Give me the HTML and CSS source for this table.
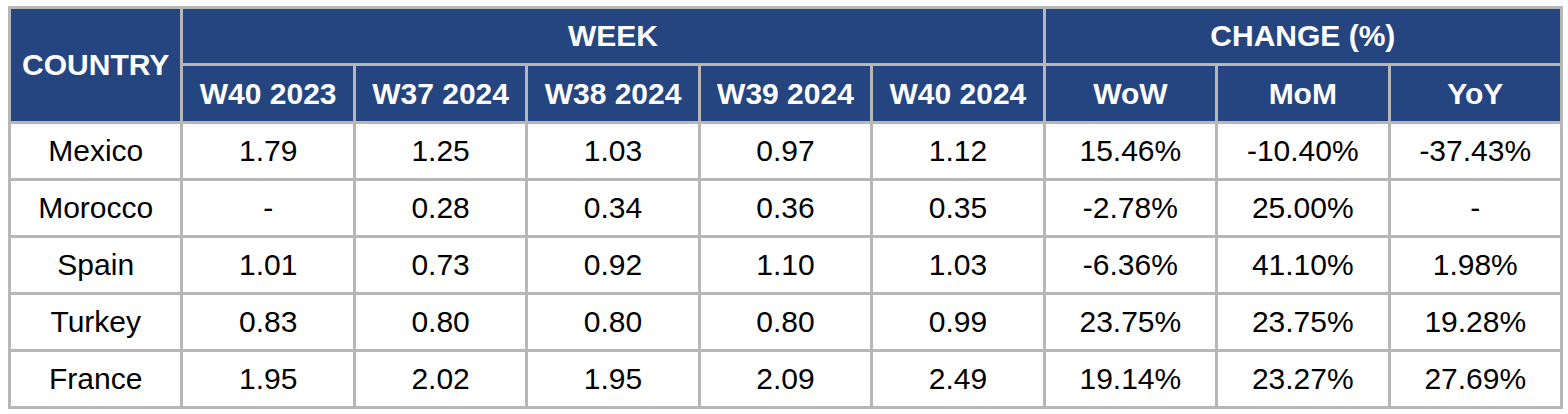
FILE: index.html
```html
<!DOCTYPE html>
<html>
<head>
<meta charset="utf-8">
<link rel="stylesheet" href="styles.css">
</head>
<body>
<table class="data">
  <colgroup>
    <col><col><col><col><col><col><col><col><col>
  </colgroup>
  <thead>
    <tr class="h1">
      <th rowspan="2" class="country-h">COUNTRY</th>
      <th colspan="5">WEEK</th>
      <th colspan="3">CHANGE (%)</th>
    </tr>
    <tr class="h2">
      <th>W40 2023</th>
      <th>W37 2024</th>
      <th>W38 2024</th>
      <th>W39 2024</th>
      <th>W40 2024</th>
      <th>WoW</th>
      <th>MoM</th>
      <th>YoY</th>
    </tr>
  </thead>
  <tbody>
    <tr><td>Mexico</td><td>1.79</td><td>1.25</td><td>1.03</td><td>0.97</td><td>1.12</td><td>15.46%</td><td>-10.40%</td><td>-37.43%</td></tr>
    <tr><td>Morocco</td><td>-</td><td>0.28</td><td>0.34</td><td>0.36</td><td>0.35</td><td>-2.78%</td><td>25.00%</td><td>-</td></tr>
    <tr><td>Spain</td><td>1.01</td><td>0.73</td><td>0.92</td><td>1.10</td><td>1.03</td><td>-6.36%</td><td>41.10%</td><td>1.98%</td></tr>
    <tr><td>Turkey</td><td>0.83</td><td>0.80</td><td>0.80</td><td>0.80</td><td>0.99</td><td>23.75%</td><td>23.75%</td><td>19.28%</td></tr>
    <tr><td>France</td><td>1.95</td><td>2.02</td><td>1.95</td><td>2.09</td><td>2.49</td><td>19.14%</td><td>23.27%</td><td>27.69%</td></tr>
  </tbody>
</table>
</body>
</html>
```

FILE: styles.css
```css
html, body {
  background: #ffffff;
}
body {
  margin: 6px 0 0 8px;
  font-family: "Liberation Sans", Arial, sans-serif;
}
.data {
  width: 1555px;
  table-layout: fixed;
  border-collapse: separate;
  border-spacing: 0;
  border-top: 3px solid #b7b7b7;
  border-left: 3px solid #b7b7b7;
}
.data th,
.data td {
  border-right: 3px solid #b7b7b7;
  border-bottom: 3px solid #b7b7b7;
  padding: 0;
  text-align: center;
  white-space: nowrap;
}
.data th {
  background: #254581;
  color: #ffffff;
  font-weight: bold;
  font-size: 30px;
}
.h1 th {
  line-height: 54px;
}
.h2 th {
  line-height: 55px;
}
.data th.country-h {
  line-height: 34px;
}
.data td {
  color: #000000;
  font-size: 30px;
  line-height: 54px;
}
```
